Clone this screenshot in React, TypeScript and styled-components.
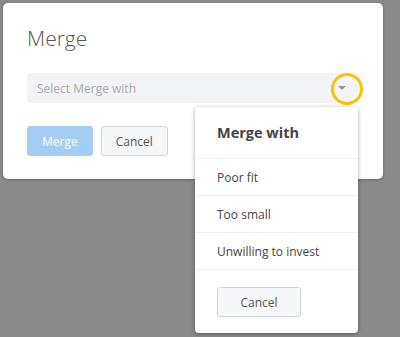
import styled, { createGlobalStyle } from 'styled-components';

const GlobalStyle = createGlobalStyle`
  html, body {
    margin: 0;
    padding: 0;
    background: #8a8a8a;
    font-family: "Open Sans", "Liberation Sans", sans-serif;
  }
`;

const Backdrop = styled.div`
  width: 400px;
  height: 337px;
  padding: 3px;
  box-sizing: border-box;
  background: #8a8a8a;
  overflow: hidden;
`;

const Modal = styled.div`
  width: 380px;
  box-sizing: border-box;
  padding: 20px 23px 23px 24px;
  background: #fff;
  border-radius: 5px;
  box-shadow: 0 1px 3px rgba(0, 0, 0, 0.25);
`;

const Title = styled.h2`
  margin: 0 0 20px 0;
  font-size: 21px;
  font-weight: 300;
  line-height: 30px;
  color: #555;
`;

const SelectWrap = styled.div`
  position: relative;
  margin-bottom: 23px;
`;

const SelectBox = styled.div`
  display: flex;
  align-items: center;
  justify-content: space-between;
  height: 30px;
  padding: 0 10px;
  background: #f3f4f5;
  border-radius: 3px;
  font-size: 12px;
  color: #a9abad;
`;

const Caret = styled.span`
  width: 0;
  height: 0;
  margin-right: 4px;
  border-left: 4px solid transparent;
  border-right: 4px solid transparent;
  border-top: 4px solid #999;
`;

const Highlight = styled.span`
  position: absolute;
  right: -3px;
  top: 0;
  width: 26px;
  height: 26px;
  border: 3px solid #f7c300;
  border-radius: 50%;
`;

const Actions = styled.div`
  display: flex;
  gap: 8px;
`;

const Button = styled.button<{ $primary?: boolean; $wide?: boolean }>`
  height: 30px;
  padding: 0 14px;
  width: ${(p) => (p.$wide ? '84px' : 'auto')};
  font-family: inherit;
  font-size: 12px;
  border-radius: 3px;
  cursor: pointer;
  color: ${(p) => (p.$primary ? '#fff' : '#555')};
  background: ${(p) => (p.$primary ? '#a4cdf6' : '#f6f7f8')};
  border: 1px solid ${(p) => (p.$primary ? '#a4cdf6' : '#d3d5d7')};
`;

const Menu = styled.div`
  position: absolute;
  top: 34px;
  right: 2px;
  width: 163px;
  background: #fff;
  border-radius: 4px;
  box-shadow: 0 1px 4px rgba(0, 0, 0, 0.35);
  z-index: 5;
`;

const MenuTitle = styled.div`
  height: 51px;
  display: flex;
  align-items: center;
  padding: 0 22px;
  font-size: 14.5px;
  font-weight: 700;
  color: #444;
  border-bottom: 1px solid #f0f0f0;
`;

const MenuItem = styled.div`
  height: 36px;
  display: flex;
  align-items: center;
  padding: 0 22px;
  font-size: 12px;
  color: #444;
  border-bottom: 1px solid #f0f0f0;
`;

const MenuFooter = styled.div`
  padding: 17px 22px 16px;
`;

const options = ['Poor fit', 'Too small', 'Unwilling to invest'];

export default function App() {
  return (
    <>
      <GlobalStyle />
      <Backdrop>
        <Modal>
          <Title>Merge</Title>
          <SelectWrap>
            <SelectBox>
              <span>Select Merge with</span>
              <Caret />
            </SelectBox>
            <Highlight />
            <Menu>
              <MenuTitle>Merge with</MenuTitle>
              {options.map((o) => (
                <MenuItem key={o}>{o}</MenuItem>
              ))}
              <MenuFooter>
                <Button $wide>Cancel</Button>
              </MenuFooter>
            </Menu>
          </SelectWrap>
          <Actions>
            <Button $primary>Merge</Button>
            <Button>Cancel</Button>
          </Actions>
        </Modal>
      </Backdrop>
    </>
  );
}
